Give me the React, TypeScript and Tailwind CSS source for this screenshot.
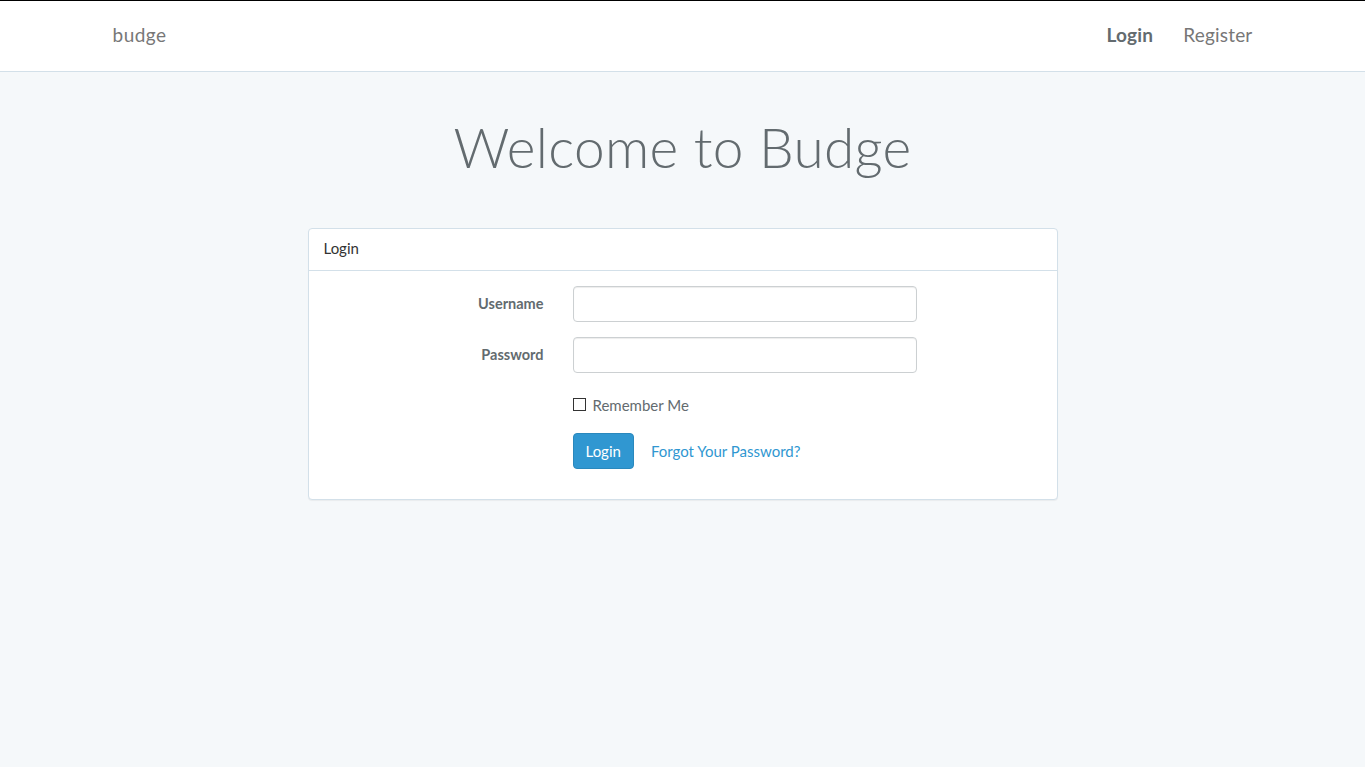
const App = () => {
  return (
    <div className="min-h-screen bg-[#f5f8fa] border-t border-black text-[#636b6f] text-[14px] leading-[1.6] font-['Lato','Liberation_Sans',sans-serif]">
      {/* Navbar */}
      <nav className="h-[71px] bg-white border-b border-[#d3e0e9]">
        <div className="mx-auto w-[1170px] px-[15px] h-full flex items-center justify-between pb-[2px]">
          <a href="#" className="text-[19px] text-[#777] tracking-[0.5px]">budge</a>
          <div className="flex items-center">
            <a href="#" className="px-[15px] text-[19px] font-bold text-[#636b6f] tracking-[0.2px]">Login</a>
            <a href="#" className="pl-[15px] text-[19px] text-[#777] tracking-[0.2px]">Register</a>
          </div>
        </div>
      </nav>

      {/* Heading */}
      <div className="mx-auto w-[1170px] px-[15px]">
        <h1 className="pt-[38px] pb-[44px] text-center text-[55px] leading-[74px] font-light text-[#636b6f] tracking-[0.3px]">
          Welcome to Budge
        </h1>

        {/* Login panel */}
        <div className="mx-auto w-[750px] bg-white border border-[#d3e0e9] rounded-[4px] shadow-[0_1px_1px_rgba(0,0,0,0.05)]">
          <div className="h-[42px] px-[15px] pb-[3px] flex items-center border-b border-[#d3e0e9] text-[#333] text-[15px]">
            Login
          </div>
          <form className="pt-[15px] pb-[15px]">
            <div className="flex items-center mb-[15px]">
              <label className="w-[250px] pr-[15px] text-right font-bold text-[14.5px]">Username</label>
              <input type="text" className="ml-[14px] w-[344px] h-[36px] border border-[#ccd0d2] rounded-[4px] bg-white shadow-[inset_0_1px_1px_rgba(0,0,0,0.075)] px-3" />
            </div>
            <div className="flex items-center mb-[15px]">
              <label className="w-[250px] pr-[15px] text-right font-bold text-[14.5px]">Password</label>
              <input type="password" className="ml-[14px] w-[344px] h-[36px] border border-[#ccd0d2] rounded-[4px] bg-white shadow-[inset_0_1px_1px_rgba(0,0,0,0.075)] px-3" />
            </div>
            <div className="flex mb-[17px] pt-[5px]">
              <div className="w-[250px]" />
              <label className="ml-[14px] flex items-center h-[23px] text-[15px]">
                <span className="w-[13px] h-[13px] border border-[#333] bg-white mr-[7px]" />
                Remember Me
              </label>
            </div>
            <div className="flex items-center">
              <div className="w-[250px]" />
              <button type="button" className="ml-[14px] h-[36px] px-[12px] rounded-[4px] bg-[#3097d1] border border-[#2a88bd] text-white text-[15px]">
                Login
              </button>
              <a href="#" className="ml-[17px] text-[#3097d1] text-[15px]">Forgot Your Password?</a>
            </div>
            <div className="h-[15px]" />
          </form>
        </div>
      </div>
    </div>
  );
};

export default App;
